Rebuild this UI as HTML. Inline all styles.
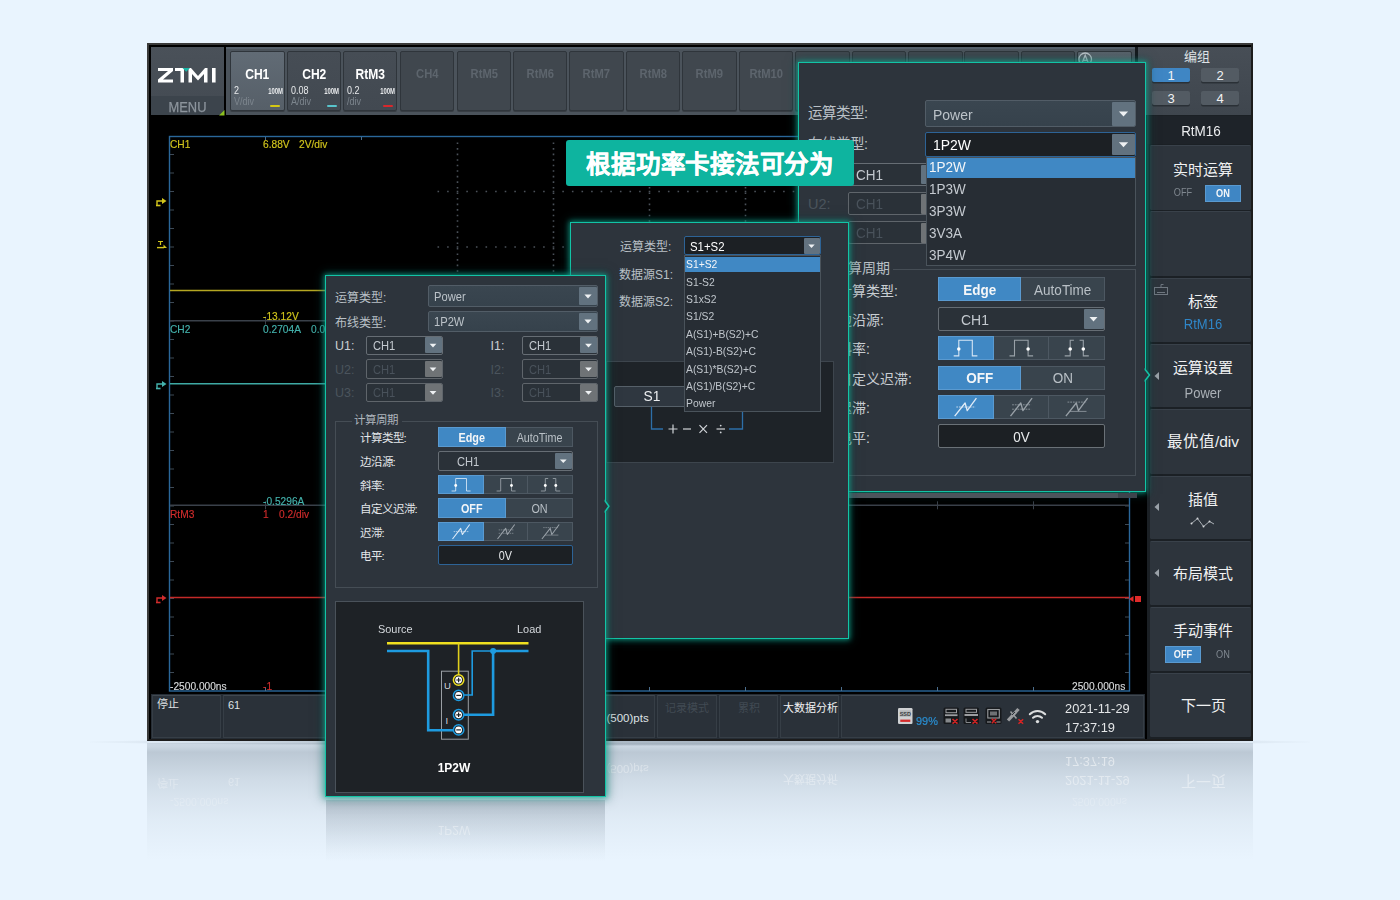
<!DOCTYPE html>
<html lang="zh-CN"><head><meta charset="utf-8"><title>ZTMI Power wiring types</title><style>
html,body{margin:0;padding:0;}
body{width:1400px;height:900px;overflow:hidden;background:#e9f4fe;font-family:"Liberation Sans",sans-serif;position:relative;}
div{position:absolute;box-sizing:border-box;}
.t{white-space:nowrap;overflow:visible;}
svg{position:absolute;overflow:visible;}
</style></head>
<body>
<div style="left:90px;top:738px;width:1220px;height:8px;background:radial-gradient(ellipse at center, rgba(110,125,140,.55) 0%, rgba(110,125,140,.35) 45%, rgba(110,125,140,0) 72%);"></div>
<div style="left:147px;top:743px;width:1106px;height:122px;background:linear-gradient(to bottom, rgba(120,135,150,.26) 0%, rgba(120,135,150,.28) 3%, rgba(120,135,150,.40) 7.500%, rgba(120,135,150,.31) 19%, rgba(120,135,150,.22) 31%, rgba(120,135,150,.14) 47%, rgba(120,135,150,.08) 63%, rgba(120,135,150,.035) 80%, rgba(120,135,150,0) 96%);"></div>
<div style="left:326px;top:800px;width:279px;height:62px;background:linear-gradient(to bottom, rgba(120,135,150,.30) 0%, rgba(120,135,150,.36) 8%, rgba(120,135,150,.24) 30%, rgba(120,135,150,.12) 58%, rgba(120,135,150,.04) 82%, rgba(120,135,150,0) 100%);"></div>
<div class="t" style="left:1065px;top:750.55px;width:80px;height:18.9px;line-height:18.9px;font-size:13.5px;color:rgba(255,255,255,0.5);text-align:left;font-weight:normal;transform-origin:left center;transform:scale(0.95,-1);filter:blur(.5px);">17:37:19</div>
<div class="t" style="left:1065px;top:769.55px;width:80px;height:18.9px;line-height:18.9px;font-size:13.5px;color:rgba(255,255,255,0.42);text-align:left;font-weight:normal;transform-origin:left center;transform:scale(0.95,-1);filter:blur(.5px);">2021-11-29</div>
<div class="t" style="left:1153px;top:770.5px;width:100px;height:21.0px;line-height:21.0px;font-size:15px;color:rgba(255,255,255,0.42);text-align:center;font-weight:normal;transform-origin:center center;transform:scale(1,-1);filter:blur(.5px);">下一页</div>
<div class="t" style="left:780px;top:771.3px;width:60px;height:15.399999999999999px;line-height:15.399999999999999px;font-size:11px;color:rgba(255,255,255,0.38);text-align:center;font-weight:normal;transform-origin:center center;transform:scale(1,-1);filter:blur(.5px);">大数据分析</div>
<div class="t" style="left:606.5px;top:760.95px;width:50px;height:16.099999999999998px;line-height:16.099999999999998px;font-size:11.5px;color:rgba(255,255,255,0.35);text-align:left;font-weight:normal;transform-origin:left center;transform:scale(1,-1);filter:blur(.5px);">(500)pts</div>
<div class="t" style="left:404px;top:820.9px;width:100px;height:18.2px;line-height:18.2px;font-size:13px;color:rgba(255,255,255,0.35);text-align:center;font-weight:normal;transform-origin:center center;transform:scale(0.92,-1);filter:blur(.5px);">1P2W</div>
<div class="t" style="left:157px;top:775.3px;width:40px;height:15.399999999999999px;line-height:15.399999999999999px;font-size:11px;color:rgba(255,255,255,0.3);text-align:left;font-weight:normal;transform-origin:left center;transform:scale(1,-1);filter:blur(.5px);">停止</div>
<div class="t" style="left:228px;top:774.3px;width:40px;height:15.399999999999999px;line-height:15.399999999999999px;font-size:11px;color:rgba(255,255,255,0.3);text-align:left;font-weight:normal;transform-origin:left center;transform:scale(1,-1);filter:blur(.5px);">61</div>
<div class="t" style="left:170px;top:793.65px;width:100px;height:14.7px;line-height:14.7px;font-size:10.5px;color:rgba(255,255,255,0.22);text-align:left;font-weight:normal;transform-origin:left center;transform:scale(1,-1);filter:blur(.5px);">-2500.000ns</div>
<div class="t" style="left:1072px;top:793.65px;width:100px;height:14.7px;line-height:14.7px;font-size:10.5px;color:rgba(255,255,255,0.22);text-align:left;font-weight:normal;transform-origin:left center;transform:scale(1,-1);filter:blur(.5px);">2500.000ns</div>
<div style="left:147px;top:43px;width:1106px;height:698px;background:#000;border:2.6px solid #3a3a3a;border-right-color:#1c1c1c;border-bottom-color:#1c1c1c;"></div>
<div style="left:149px;top:45px;width:1102px;height:694px;background:#000;"></div>
<div style="left:151px;top:47px;width:73px;height:49px;background:linear-gradient(#4a5159,#454c54);"></div>
<div style="left:151px;top:96px;width:73px;height:19px;background:#3c444c;"></div>
<svg style="left:158px;top:68px" width="60" height="15" viewBox="0 0 60 15"><g fill="#fff"><path d="M0,0H15V3L5,11.5H15V14.5H0V11.5L10,3H0Z"/><path d="M17,0H26V14.5H22.5V3H17Z"/><path d="M33,0L40,8L47,0H49.5V14.5H46V6L40,12.5L34,6V14.5H30.5V0Z"/><rect x="54" y="0" width="3.6" height="14.5"/></g><path d="M24.5,0H32L28.2,3.8Z" fill="#19b5a5"/></svg>
<div class="t" style="left:151px;top:98px;width:73px;height:19px;line-height:19px;font-size:14px;color:#8d959d;text-align:center;font-weight:normal;transform:scaleX(.92);-webkit-text-stroke:0.25px #8d959d;">MENU</div>
<svg style="left:218.500px;top:109.500px" width="5.500" height="5.500"><path d="M5.500,0V5.500H0Z" fill="#8dc21f"/></svg>
<div style="left:226px;top:47px;width:909px;height:68px;background:#4b535b;border-top:2.5px solid #56616c;"></div>
<div style="left:230px;top:50.5px;width:54.5px;height:60px;background:linear-gradient(#616b75,#565f68);border:1px solid #2f353b;border-radius:2px;box-shadow:0 1px 0 rgba(0,0,0,.25);"></div>
<div class="t" style="left:230px;top:64px;width:54.5px;height:20px;line-height:20px;font-size:14px;color:#fff;text-align:center;font-weight:bold;transform:scaleX(.86);">CH1</div>
<div style="left:286.5px;top:50.5px;width:54.5px;height:60px;background:linear-gradient(#464d55,#424951);border:1px solid #2f353b;border-radius:2px;box-shadow:0 1px 0 rgba(0,0,0,.25);"></div>
<div class="t" style="left:286.5px;top:64px;width:54.5px;height:20px;line-height:20px;font-size:14px;color:#fff;text-align:center;font-weight:bold;transform:scaleX(.86);">CH2</div>
<div style="left:342.5px;top:50.5px;width:54.5px;height:60px;background:linear-gradient(#464d55,#424951);border:1px solid #2f353b;border-radius:2px;box-shadow:0 1px 0 rgba(0,0,0,.25);"></div>
<div class="t" style="left:342.5px;top:64px;width:54.5px;height:20px;line-height:20px;font-size:14px;color:#fff;text-align:center;font-weight:bold;transform:scaleX(.86);">RtM3</div>
<div style="left:399.5px;top:50.5px;width:54.5px;height:60px;background:#40474e;border:1px solid #2f353b;border-radius:2px;box-shadow:0 1px 0 rgba(0,0,0,.25);"></div>
<div class="t" style="left:399.5px;top:64px;width:54.5px;height:20px;line-height:20px;font-size:13px;color:#5d656d;text-align:center;font-weight:bold;transform:scaleX(.86);">CH4</div>
<div style="left:456.5px;top:50.5px;width:54.5px;height:60px;background:#40474e;border:1px solid #2f353b;border-radius:2px;box-shadow:0 1px 0 rgba(0,0,0,.25);"></div>
<div class="t" style="left:456.5px;top:64px;width:54.5px;height:20px;line-height:20px;font-size:13px;color:#5d656d;text-align:center;font-weight:bold;transform:scaleX(.86);">RtM5</div>
<div style="left:512.5px;top:50.5px;width:54.5px;height:60px;background:#40474e;border:1px solid #2f353b;border-radius:2px;box-shadow:0 1px 0 rgba(0,0,0,.25);"></div>
<div class="t" style="left:512.5px;top:64px;width:54.5px;height:20px;line-height:20px;font-size:13px;color:#5d656d;text-align:center;font-weight:bold;transform:scaleX(.86);">RtM6</div>
<div style="left:569px;top:50.5px;width:54.5px;height:60px;background:#40474e;border:1px solid #2f353b;border-radius:2px;box-shadow:0 1px 0 rgba(0,0,0,.25);"></div>
<div class="t" style="left:569px;top:64px;width:54.5px;height:20px;line-height:20px;font-size:13px;color:#5d656d;text-align:center;font-weight:bold;transform:scaleX(.86);">RtM7</div>
<div style="left:625.5px;top:50.5px;width:54.5px;height:60px;background:#40474e;border:1px solid #2f353b;border-radius:2px;box-shadow:0 1px 0 rgba(0,0,0,.25);"></div>
<div class="t" style="left:625.5px;top:64px;width:54.5px;height:20px;line-height:20px;font-size:13px;color:#5d656d;text-align:center;font-weight:bold;transform:scaleX(.86);">RtM8</div>
<div style="left:682px;top:50.5px;width:54.5px;height:60px;background:#40474e;border:1px solid #2f353b;border-radius:2px;box-shadow:0 1px 0 rgba(0,0,0,.25);"></div>
<div class="t" style="left:682px;top:64px;width:54.5px;height:20px;line-height:20px;font-size:13px;color:#5d656d;text-align:center;font-weight:bold;transform:scaleX(.86);">RtM9</div>
<div style="left:738.5px;top:50.5px;width:54.5px;height:60px;background:#40474e;border:1px solid #2f353b;border-radius:2px;box-shadow:0 1px 0 rgba(0,0,0,.25);"></div>
<div class="t" style="left:738.5px;top:64px;width:54.5px;height:20px;line-height:20px;font-size:13px;color:#5d656d;text-align:center;font-weight:bold;transform:scaleX(.86);">RtM10</div>
<div style="left:795px;top:50.5px;width:54.5px;height:60px;background:#40474e;border:1px solid #2f353b;border-radius:2px;box-shadow:0 1px 0 rgba(0,0,0,.25);"></div>
<div style="left:851.5px;top:50.5px;width:54.5px;height:60px;background:#40474e;border:1px solid #2f353b;border-radius:2px;box-shadow:0 1px 0 rgba(0,0,0,.25);"></div>
<div style="left:908px;top:50.5px;width:54.5px;height:60px;background:#40474e;border:1px solid #2f353b;border-radius:2px;box-shadow:0 1px 0 rgba(0,0,0,.25);"></div>
<div style="left:964px;top:50.5px;width:54.5px;height:60px;background:#40474e;border:1px solid #2f353b;border-radius:2px;box-shadow:0 1px 0 rgba(0,0,0,.25);"></div>
<div style="left:1020.5px;top:50.5px;width:54.5px;height:60px;background:#40474e;border:1px solid #2f353b;border-radius:2px;box-shadow:0 1px 0 rgba(0,0,0,.25);"></div>
<div style="left:1077px;top:50.5px;width:54.5px;height:60px;background:linear-gradient(#59626a,#6a747c);border:1px solid #2f353b;border-radius:2px;box-shadow:0 1px 0 rgba(0,0,0,.25);"></div>
<div class="t" style="left:234px;top:85px;width:30px;height:12px;line-height:12px;font-size:10px;color:#e8eaec;text-align:left;font-weight:normal;transform-origin:left;transform:scaleX(.9);">2</div>
<div class="t" style="left:234px;top:96px;width:30px;height:12px;line-height:12px;font-size:10px;color:#7c858d;text-align:left;font-weight:normal;transform-origin:left;transform:scaleX(.9);">V/div</div>
<div class="t" style="left:252.8px;top:84.5px;width:30px;height:12px;line-height:12px;font-size:9px;color:#e8eaec;text-align:right;font-weight:bold;transform-origin:right;transform:scaleX(.66);">100M</div>
<div style="left:270px;top:105px;width:10px;height:2.2px;background:#d4c814;border-radius:1px;"></div>
<div class="t" style="left:290.5px;top:85px;width:30px;height:12px;line-height:12px;font-size:10px;color:#e8eaec;text-align:left;font-weight:normal;transform-origin:left;transform:scaleX(.9);">0.08</div>
<div class="t" style="left:290.5px;top:96px;width:30px;height:12px;line-height:12px;font-size:10px;color:#7c858d;text-align:left;font-weight:normal;transform-origin:left;transform:scaleX(.9);">A/div</div>
<div class="t" style="left:309.3px;top:84.5px;width:30px;height:12px;line-height:12px;font-size:9px;color:#e8eaec;text-align:right;font-weight:bold;transform-origin:right;transform:scaleX(.66);">100M</div>
<div style="left:326.5px;top:105px;width:10px;height:2.2px;background:#58c4cc;border-radius:1px;"></div>
<div class="t" style="left:346.5px;top:85px;width:30px;height:12px;line-height:12px;font-size:10px;color:#e8eaec;text-align:left;font-weight:normal;transform-origin:left;transform:scaleX(.9);">0.2</div>
<div class="t" style="left:346.5px;top:96px;width:30px;height:12px;line-height:12px;font-size:10px;color:#7c858d;text-align:left;font-weight:normal;transform-origin:left;transform:scaleX(.9);">/div</div>
<div class="t" style="left:365.3px;top:84.5px;width:30px;height:12px;line-height:12px;font-size:9px;color:#e8eaec;text-align:right;font-weight:bold;transform-origin:right;transform:scaleX(.66);">100M</div>
<div style="left:382.5px;top:105px;width:10px;height:2.2px;background:#d8282c;border-radius:1px;"></div>
<svg style="left:1077px;top:50px" width="20" height="16"><circle cx="8.200" cy="9.300" r="6.300" fill="none" stroke="#bcc2c8" stroke-width="1.300"/><path d="M5.300,12.600L8.200,5.300L11.100,12.600M6.300,10.300H10.100" fill="none" stroke="#bcc2c8" stroke-width="1.300"/></svg>
<svg style="left:0;top:0" width="1400" height="900"><line x1="457.5" y1="142.5" x2="457.5" y2="320" stroke="#4b5159" stroke-width="1.6" stroke-dasharray="1.6 3.95"/><line x1="553.5" y1="142.5" x2="553.5" y2="320" stroke="#4b5159" stroke-width="1.6" stroke-dasharray="1.6 3.95"/><line x1="649.5" y1="142.5" x2="649.5" y2="320" stroke="#4b5159" stroke-width="1.6" stroke-dasharray="1.6 3.95"/><line x1="745.5" y1="142.5" x2="745.5" y2="320" stroke="#4b5159" stroke-width="1.6" stroke-dasharray="1.6 3.95"/><line x1="841.5" y1="142.5" x2="841.5" y2="320" stroke="#4b5159" stroke-width="1.6" stroke-dasharray="1.6 3.95"/><line x1="937.5" y1="142.5" x2="937.5" y2="320" stroke="#4b5159" stroke-width="1.6" stroke-dasharray="1.6 3.95"/><line x1="1033.5" y1="142.5" x2="1033.5" y2="320" stroke="#4b5159" stroke-width="1.6" stroke-dasharray="1.6 3.95"/><line x1="437.5" y1="191.5" x2="1129" y2="191.5" stroke="#4b5159" stroke-width="1.6" stroke-dasharray="1.6 8.0"/><line x1="437.5" y1="247.0" x2="1129" y2="247.0" stroke="#4b5159" stroke-width="1.6" stroke-dasharray="1.6 8.0"/><rect x="169.5" y="136.5" width="960" height="554.5" fill="none" stroke="#2a679a" stroke-width="1.4"/><line x1="170" y1="154.5" x2="174" y2="154.5" stroke="#3d4a57" stroke-width="1"/><line x1="170" y1="173.0" x2="174" y2="173.0" stroke="#3d4a57" stroke-width="1"/><line x1="170" y1="191.5" x2="174" y2="191.5" stroke="#3d4a57" stroke-width="1"/><line x1="170" y1="210.0" x2="174" y2="210.0" stroke="#3d4a57" stroke-width="1"/><line x1="170" y1="228.5" x2="174" y2="228.5" stroke="#3d4a57" stroke-width="1"/><line x1="170" y1="247.0" x2="174" y2="247.0" stroke="#3d4a57" stroke-width="1"/><line x1="170" y1="265.5" x2="174" y2="265.5" stroke="#3d4a57" stroke-width="1"/><line x1="170" y1="284.0" x2="174" y2="284.0" stroke="#3d4a57" stroke-width="1"/><line x1="170" y1="302.5" x2="174" y2="302.5" stroke="#3d4a57" stroke-width="1"/><line x1="170" y1="321.0" x2="174" y2="321.0" stroke="#3d4a57" stroke-width="1"/><line x1="170" y1="339.5" x2="174" y2="339.5" stroke="#3d4a57" stroke-width="1"/><line x1="170" y1="358.0" x2="174" y2="358.0" stroke="#3d4a57" stroke-width="1"/><line x1="170" y1="376.5" x2="174" y2="376.5" stroke="#3d4a57" stroke-width="1"/><line x1="170" y1="395.0" x2="174" y2="395.0" stroke="#3d4a57" stroke-width="1"/><line x1="170" y1="413.5" x2="174" y2="413.5" stroke="#3d4a57" stroke-width="1"/><line x1="170" y1="432.0" x2="174" y2="432.0" stroke="#3d4a57" stroke-width="1"/><line x1="170" y1="450.5" x2="174" y2="450.5" stroke="#3d4a57" stroke-width="1"/><line x1="170" y1="469.0" x2="174" y2="469.0" stroke="#3d4a57" stroke-width="1"/><line x1="170" y1="487.5" x2="174" y2="487.5" stroke="#3d4a57" stroke-width="1"/><line x1="170" y1="506.0" x2="174" y2="506.0" stroke="#3d4a57" stroke-width="1"/><line x1="170" y1="524.5" x2="174" y2="524.5" stroke="#3d4a57" stroke-width="1"/><line x1="170" y1="543.0" x2="174" y2="543.0" stroke="#3d4a57" stroke-width="1"/><line x1="170" y1="561.5" x2="174" y2="561.5" stroke="#3d4a57" stroke-width="1"/><line x1="170" y1="580.0" x2="174" y2="580.0" stroke="#3d4a57" stroke-width="1"/><line x1="170" y1="598.5" x2="174" y2="598.5" stroke="#3d4a57" stroke-width="1"/><line x1="170" y1="617.0" x2="174" y2="617.0" stroke="#3d4a57" stroke-width="1"/><line x1="170" y1="635.5" x2="174" y2="635.5" stroke="#3d4a57" stroke-width="1"/><line x1="170" y1="654.0" x2="174" y2="654.0" stroke="#3d4a57" stroke-width="1"/><line x1="170" y1="672.5" x2="174" y2="672.5" stroke="#3d4a57" stroke-width="1"/><line x1="1125" y1="154.5" x2="1129" y2="154.5" stroke="#3d4a57" stroke-width="1"/><line x1="1125" y1="173.0" x2="1129" y2="173.0" stroke="#3d4a57" stroke-width="1"/><line x1="1125" y1="191.5" x2="1129" y2="191.5" stroke="#3d4a57" stroke-width="1"/><line x1="1125" y1="210.0" x2="1129" y2="210.0" stroke="#3d4a57" stroke-width="1"/><line x1="1125" y1="228.5" x2="1129" y2="228.5" stroke="#3d4a57" stroke-width="1"/><line x1="1125" y1="247.0" x2="1129" y2="247.0" stroke="#3d4a57" stroke-width="1"/><line x1="1125" y1="265.5" x2="1129" y2="265.5" stroke="#3d4a57" stroke-width="1"/><line x1="1125" y1="284.0" x2="1129" y2="284.0" stroke="#3d4a57" stroke-width="1"/><line x1="1125" y1="302.5" x2="1129" y2="302.5" stroke="#3d4a57" stroke-width="1"/><line x1="1125" y1="321.0" x2="1129" y2="321.0" stroke="#3d4a57" stroke-width="1"/><line x1="1125" y1="339.5" x2="1129" y2="339.5" stroke="#3d4a57" stroke-width="1"/><line x1="1125" y1="358.0" x2="1129" y2="358.0" stroke="#3d4a57" stroke-width="1"/><line x1="1125" y1="376.5" x2="1129" y2="376.5" stroke="#3d4a57" stroke-width="1"/><line x1="1125" y1="395.0" x2="1129" y2="395.0" stroke="#3d4a57" stroke-width="1"/><line x1="1125" y1="413.5" x2="1129" y2="413.5" stroke="#3d4a57" stroke-width="1"/><line x1="1125" y1="432.0" x2="1129" y2="432.0" stroke="#3d4a57" stroke-width="1"/><line x1="1125" y1="450.5" x2="1129" y2="450.5" stroke="#3d4a57" stroke-width="1"/><line x1="1125" y1="469.0" x2="1129" y2="469.0" stroke="#3d4a57" stroke-width="1"/><line x1="1125" y1="487.5" x2="1129" y2="487.5" stroke="#3d4a57" stroke-width="1"/><line x1="1125" y1="506.0" x2="1129" y2="506.0" stroke="#3d4a57" stroke-width="1"/><line x1="1125" y1="524.5" x2="1129" y2="524.5" stroke="#3d4a57" stroke-width="1"/><line x1="1125" y1="543.0" x2="1129" y2="543.0" stroke="#3d4a57" stroke-width="1"/><line x1="1125" y1="561.5" x2="1129" y2="561.5" stroke="#3d4a57" stroke-width="1"/><line x1="1125" y1="580.0" x2="1129" y2="580.0" stroke="#3d4a57" stroke-width="1"/><line x1="1125" y1="598.5" x2="1129" y2="598.5" stroke="#3d4a57" stroke-width="1"/><line x1="1125" y1="617.0" x2="1129" y2="617.0" stroke="#3d4a57" stroke-width="1"/><line x1="1125" y1="635.5" x2="1129" y2="635.5" stroke="#3d4a57" stroke-width="1"/><line x1="1125" y1="654.0" x2="1129" y2="654.0" stroke="#3d4a57" stroke-width="1"/><line x1="1125" y1="672.5" x2="1129" y2="672.5" stroke="#3d4a57" stroke-width="1"/><line x1="265.5" y1="316.7" x2="265.5" y2="324.7" stroke="#3a414a" stroke-width="1"/><line x1="265.5" y1="501.3" x2="265.5" y2="509.3" stroke="#3a414a" stroke-width="1"/><line x1="361.5" y1="316.7" x2="361.5" y2="324.7" stroke="#3a414a" stroke-width="1"/><line x1="361.5" y1="501.3" x2="361.5" y2="509.3" stroke="#3a414a" stroke-width="1"/><line x1="457.5" y1="316.7" x2="457.5" y2="324.7" stroke="#3a414a" stroke-width="1"/><line x1="457.5" y1="501.3" x2="457.5" y2="509.3" stroke="#3a414a" stroke-width="1"/><line x1="553.5" y1="316.7" x2="553.5" y2="324.7" stroke="#3a414a" stroke-width="1"/><line x1="553.5" y1="501.3" x2="553.5" y2="509.3" stroke="#3a414a" stroke-width="1"/><line x1="649.5" y1="316.7" x2="649.5" y2="324.7" stroke="#3a414a" stroke-width="1"/><line x1="649.5" y1="501.3" x2="649.5" y2="509.3" stroke="#3a414a" stroke-width="1"/><line x1="745.5" y1="316.7" x2="745.5" y2="324.7" stroke="#3a414a" stroke-width="1"/><line x1="745.5" y1="501.3" x2="745.5" y2="509.3" stroke="#3a414a" stroke-width="1"/><line x1="841.5" y1="316.7" x2="841.5" y2="324.7" stroke="#3a414a" stroke-width="1"/><line x1="841.5" y1="501.3" x2="841.5" y2="509.3" stroke="#3a414a" stroke-width="1"/><line x1="937.5" y1="316.7" x2="937.5" y2="324.7" stroke="#3a414a" stroke-width="1"/><line x1="937.5" y1="501.3" x2="937.5" y2="509.3" stroke="#3a414a" stroke-width="1"/><line x1="1033.5" y1="316.7" x2="1033.5" y2="324.7" stroke="#3a414a" stroke-width="1"/><line x1="1033.5" y1="501.3" x2="1033.5" y2="509.3" stroke="#3a414a" stroke-width="1"/><line x1="265.5" y1="137" x2="265.5" y2="140" stroke="#4b6e8d" stroke-width="1"/><line x1="265.5" y1="687" x2="265.5" y2="691" stroke="#4b6e8d" stroke-width="1"/><line x1="361.5" y1="137" x2="361.5" y2="140" stroke="#4b6e8d" stroke-width="1"/><line x1="361.5" y1="687" x2="361.5" y2="691" stroke="#4b6e8d" stroke-width="1"/><line x1="457.5" y1="687" x2="457.5" y2="691" stroke="#4b6e8d" stroke-width="1"/><line x1="553.5" y1="687" x2="553.5" y2="691" stroke="#4b6e8d" stroke-width="1"/><line x1="649.5" y1="687" x2="649.5" y2="691" stroke="#4b6e8d" stroke-width="1"/><line x1="745.5" y1="687" x2="745.5" y2="691" stroke="#4b6e8d" stroke-width="1"/><line x1="841.5" y1="687" x2="841.5" y2="691" stroke="#4b6e8d" stroke-width="1"/><line x1="937.5" y1="687" x2="937.5" y2="691" stroke="#4b6e8d" stroke-width="1"/><line x1="1033.5" y1="687" x2="1033.5" y2="691" stroke="#4b6e8d" stroke-width="1"/><line x1="170" y1="320.7" x2="1129" y2="320.7" stroke="#3a414a" stroke-width="1.4"/><line x1="170" y1="505.3" x2="1129" y2="505.3" stroke="#3a414a" stroke-width="1.4"/><line x1="170" y1="290.5" x2="1129" y2="290.5" stroke="#b5a722" stroke-width="1.6"/><line x1="170" y1="383.7" x2="1129" y2="383.7" stroke="#3ea9a4" stroke-width="1.6"/><line x1="170" y1="597.5" x2="1129" y2="597.5" stroke="#c42a28" stroke-width="1.6"/></svg>
<div class="t" style="left:170px;top:138px;width:100px;height:12px;line-height:12px;font-size:10.5px;color:#d3c61c;text-align:left;font-weight:normal;transform-origin:left;transform:scaleX(.97);-webkit-text-stroke:0.15px currentColor;">CH1</div>
<div class="t" style="left:263px;top:138px;width:100px;height:12px;line-height:12px;font-size:10.5px;color:#d3c61c;text-align:left;font-weight:normal;transform-origin:left;transform:scaleX(.97);-webkit-text-stroke:0.15px currentColor;">6.88V</div>
<div class="t" style="left:299px;top:138px;width:100px;height:12px;line-height:12px;font-size:10.5px;color:#d3c61c;text-align:left;font-weight:normal;transform-origin:left;transform:scaleX(.97);-webkit-text-stroke:0.15px currentColor;">2V/div</div>
<div class="t" style="left:263px;top:310px;width:100px;height:12px;line-height:12px;font-size:10.5px;color:#d3c61c;text-align:left;font-weight:normal;transform-origin:left;transform:scaleX(.97);-webkit-text-stroke:0.15px currentColor;">-13.12V</div>
<div class="t" style="left:170px;top:323px;width:100px;height:12px;line-height:12px;font-size:10.5px;color:#44b3ad;text-align:left;font-weight:normal;transform-origin:left;transform:scaleX(.97);-webkit-text-stroke:0.15px currentColor;">CH2</div>
<div class="t" style="left:263px;top:323px;width:100px;height:12px;line-height:12px;font-size:10.5px;color:#44b3ad;text-align:left;font-weight:normal;transform-origin:left;transform:scaleX(.97);-webkit-text-stroke:0.15px currentColor;">0.2704A</div>
<div class="t" style="left:311px;top:323px;width:100px;height:12px;line-height:12px;font-size:10.5px;color:#44b3ad;text-align:left;font-weight:normal;transform-origin:left;transform:scaleX(.97);-webkit-text-stroke:0.15px currentColor;">0.0</div>
<div class="t" style="left:263px;top:495px;width:100px;height:12px;line-height:12px;font-size:10.5px;color:#44b3ad;text-align:left;font-weight:normal;transform-origin:left;transform:scaleX(.97);-webkit-text-stroke:0.15px currentColor;">-0.5296A</div>
<div class="t" style="left:170px;top:508px;width:100px;height:12px;line-height:12px;font-size:10.5px;color:#d12c2c;text-align:left;font-weight:normal;transform-origin:left;transform:scaleX(.97);-webkit-text-stroke:0.15px currentColor;">RtM3</div>
<div class="t" style="left:263px;top:508px;width:100px;height:12px;line-height:12px;font-size:10.5px;color:#d12c2c;text-align:left;font-weight:normal;transform-origin:left;transform:scaleX(.97);-webkit-text-stroke:0.15px currentColor;">1</div>
<div class="t" style="left:279px;top:508px;width:100px;height:12px;line-height:12px;font-size:10.5px;color:#d12c2c;text-align:left;font-weight:normal;transform-origin:left;transform:scaleX(.97);-webkit-text-stroke:0.15px currentColor;">0.2/div</div>
<div class="t" style="left:170px;top:680px;width:100px;height:12px;line-height:12px;font-size:10.5px;color:#d8dadc;text-align:left;font-weight:normal;transform-origin:left;transform:scaleX(.97);-webkit-text-stroke:0.15px currentColor;">-2500.000ns</div>
<div class="t" style="left:263px;top:680px;width:100px;height:12px;line-height:12px;font-size:10.5px;color:#d12c2c;text-align:left;font-weight:normal;transform-origin:left;transform:scaleX(.97);-webkit-text-stroke:0.15px currentColor;">-1</div>
<div class="t" style="left:1072px;top:680px;width:100px;height:12px;line-height:12px;font-size:10.5px;color:#d8dadc;text-align:left;font-weight:normal;transform-origin:left;transform:scaleX(.97);-webkit-text-stroke:0.15px currentColor;">2500.000ns</div>
<svg style="left:156px;top:196px" width="12" height="12"><path d="M1,9V5H6" fill="none" stroke="#d3c61c" stroke-width="1.4"/><path d="M6,2L10.5,5L6,8Z" fill="#d3c61c"/><path d="M0,9.5H4.5" stroke="#d3c61c" stroke-width="1.6"/></svg>
<svg style="left:156px;top:239px" width="12" height="12"><path d="M2,2.5H7M4.5,2.5V6" fill="none" stroke="#d3c61c" stroke-width="1.2"/><path d="M1,8.6H8" stroke="#d3c61c" stroke-width="1.4"/><path d="M7.5,5.5L11,9L7.5,9Z" fill="#d3c61c"/></svg>
<svg style="left:156px;top:379px" width="12" height="12"><path d="M1,9V5H6" fill="none" stroke="#44b3ad" stroke-width="1.4"/><path d="M6,2L10.5,5L6,8Z" fill="#44b3ad"/><path d="M0,9.5H4.5" stroke="#44b3ad" stroke-width="1.6"/></svg>
<svg style="left:156px;top:593px" width="12" height="12"><path d="M1,9V5H6" fill="none" stroke="#d12c2c" stroke-width="1.4"/><path d="M6,2L10.5,5L6,8Z" fill="#d12c2c"/><path d="M0,9.5H4.5" stroke="#d12c2c" stroke-width="1.6"/></svg>
<svg style="left:1129px;top:594px" width="14" height="10"><path d="M0,5L4.5,2V8Z" fill="#e02a2a"/><rect x="6" y="2" width="6" height="6" fill="#e02a2a"/></svg>
<div style="left:151px;top:694px;width:994px;height:45px;background:#262d35;"></div>
<div style="left:152px;top:695px;width:69px;height:43px;background:#2a3139;border:1px solid #363e46;border-top-color:#404850;"></div>
<div style="left:223px;top:695px;width:371px;height:43px;background:#2a3139;border:1px solid #363e46;border-top-color:#404850;"></div>
<div style="left:596px;top:695px;width:59px;height:43px;background:#2a3139;border:1px solid #363e46;border-top-color:#404850;"></div>
<div style="left:657px;top:695px;width:60px;height:43px;background:#2a3139;border:1px solid #363e46;border-top-color:#404850;"></div>
<div style="left:719px;top:695px;width:59px;height:43px;background:#2a3139;border:1px solid #363e46;border-top-color:#404850;"></div>
<div style="left:780px;top:695px;width:59px;height:43px;background:#2a3139;border:1px solid #363e46;border-top-color:#404850;"></div>
<div style="left:841px;top:695px;width:303px;height:43px;background:#2a3139;border:1px solid #363e46;border-top-color:#404850;"></div>
<div class="t" style="left:157px;top:697px;width:40px;height:14px;line-height:14px;font-size:11px;color:#dfe2e5;text-align:left;font-weight:normal;">停止</div>
<div class="t" style="left:228px;top:698px;width:40px;height:14px;line-height:14px;font-size:11px;color:#dfe2e5;text-align:left;font-weight:normal;">61</div>
<div class="t" style="left:606.5px;top:711px;width:50px;height:14px;line-height:14px;font-size:11.5px;color:#dfe2e5;text-align:left;font-weight:normal;transform-origin:left;transform:scaleX(1);">(500)pts</div>
<div class="t" style="left:657px;top:701px;width:60px;height:14px;line-height:14px;font-size:11px;color:#414a53;text-align:center;font-weight:normal;">记录模式</div>
<div class="t" style="left:719px;top:701px;width:60px;height:14px;line-height:14px;font-size:11px;color:#414a53;text-align:center;font-weight:normal;">累积</div>
<div class="t" style="left:780px;top:701px;width:60px;height:14px;line-height:14px;font-size:11px;color:#f2f3f4;text-align:center;font-weight:normal;">大数据分析</div>
<div class="t" style="left:1065px;top:700.5px;width:80px;height:15px;line-height:15px;font-size:13.5px;color:#e4e6e8;text-align:left;font-weight:normal;transform-origin:left;transform:scaleX(.95);">2021-11-29</div>
<div class="t" style="left:1065px;top:720px;width:80px;height:15px;line-height:15px;font-size:13.5px;color:#e4e6e8;text-align:left;font-weight:normal;transform-origin:left;transform:scaleX(.95);">17:37:19</div>
<svg style="left:0;top:0" width="1400" height="900">
<rect x="898" y="708" width="14.500" height="16" rx="1.200" fill="#cfd1d3"/><rect x="899.800" y="710.300" width="11" height="6.500" fill="#b4b7ba"/><text x="905.300" y="716" font-size="5.500" font-weight="bold" text-anchor="middle" fill="#3a3e42" font-family="Liberation Sans, sans-serif">SSD</text><rect x="900.300" y="719.600" width="10" height="2.300" fill="#d42a2a"/>
<g><rect x="943.500" y="707.500" width="15.500" height="16.500" rx="1.500" fill="#16191c"/><rect x="946" y="709.300" width="10.500" height="3.400" fill="none" stroke="#9b9da0" stroke-width="1"/><rect x="945" y="714.300" width="12.500" height="1.800" fill="#9b9da0"/><path d="M945.500,722.500V718.500H951V722.500Z" fill="#85888b"/>
<rect x="963.500" y="707.500" width="15.500" height="16.500" rx="1.500" fill="#16191c"/><rect x="966" y="709.300" width="10.500" height="3" fill="none" stroke="#9b9da0" stroke-width="1"/><rect x="964.500" y="714" width="13.500" height="2" fill="#9b9da0"/><path d="M966,718.500V722.500H971" fill="none" stroke="#85888b" stroke-width="1"/>
<rect x="985.500" y="707.500" width="16" height="16.500" rx="1.500" fill="#16191c"/><rect x="987.800" y="709.500" width="11.500" height="8.500" fill="none" stroke="#9b9da0" stroke-width="1.100"/><rect x="990" y="711.500" width="7" height="4" fill="#6e7174"/><path d="M987,722H991M996.500,722H1000.500" stroke="#9b9da0" stroke-width="1.200"/>
<path d="M1008,720.500L1018.500,709" stroke="#9b9da0" stroke-width="3.200"/><path d="M1010.500,711.500L1016.500,718.500" stroke="#9b9da0" stroke-width="1.600"/><path d="M1012,715L1015,712" stroke="#2b3239" stroke-width="1"/></g>
<path d="M952.500,719l5,4.600m0,-4.600l-5,4.600M972.500,719l5,4.600m0,-4.600l-5,4.600M991.800,718.800l4.400,4.400m0,-4.400l-4.400,4.400M1018.500,719.200l4.600,4.600m0,-4.600l-4.600,4.600" stroke="#d62424" stroke-width="1.500" fill="none"/>
<g fill="none" stroke="#dcdedf" stroke-width="2" stroke-linecap="round"><path d="M1029.800,714.300A10.800,10.800 0 0 1 1045.200,714.300"/><path d="M1033,717.800A6.300,6.300 0 0 1 1042,717.800"/></g><circle cx="1037.500" cy="721.600" r="1.700" fill="#dcdedf"/>
</svg>
<div class="t" style="left:915.5px;top:714px;width:30px;height:14px;line-height:14px;font-size:11.5px;color:#2a8fd2;text-align:left;font-weight:normal;transform-origin:left;transform:scaleX(.95);-webkit-text-stroke:.2px #2a8fd2;">99%</div>
<div style="left:1135px;top:47px;width:2.5px;height:68px;background:#15191d;"></div>
<div style="left:1146.5px;top:115px;width:104.5px;height:624px;background:#1b2025;"></div>
<div style="left:1137.5px;top:47px;width:113.5px;height:68px;background:linear-gradient(#474e56,#3f464e);"></div>
<div class="t" style="left:1139px;top:49px;width:112px;height:16px;line-height:16px;font-size:13px;color:#dfe2e5;text-align:center;font-weight:normal;padding-left:4px;">编组</div>
<div style="left:1152px;top:68px;width:38px;height:14px;background:#3f86c4;border-radius:2px;box-shadow:0 1.5px 0 #2a3036;"></div>
<div class="t" style="left:1152px;top:68px;width:38px;height:15px;line-height:15px;font-size:13px;color:#f2f3f4;text-align:center;font-weight:normal;">1</div>
<div style="left:1201px;top:68px;width:38px;height:14px;background:#535b63;border-radius:2px;box-shadow:0 1.5px 0 #2a3036;"></div>
<div class="t" style="left:1201px;top:68px;width:38px;height:15px;line-height:15px;font-size:13px;color:#f2f3f4;text-align:center;font-weight:normal;">2</div>
<div style="left:1152px;top:91px;width:38px;height:14px;background:#535b63;border-radius:2px;box-shadow:0 1.5px 0 #2a3036;"></div>
<div class="t" style="left:1152px;top:91px;width:38px;height:15px;line-height:15px;font-size:13px;color:#f2f3f4;text-align:center;font-weight:normal;">3</div>
<div style="left:1201px;top:91px;width:38px;height:14px;background:#535b63;border-radius:2px;box-shadow:0 1.5px 0 #2a3036;"></div>
<div class="t" style="left:1201px;top:91px;width:38px;height:15px;line-height:15px;font-size:13px;color:#f2f3f4;text-align:center;font-weight:normal;">4</div>
<div style="left:1147px;top:116px;width:104px;height:28px;background:#1e2329;"></div>
<div class="t" style="left:1147px;top:117px;width:108px;height:28px;line-height:28px;font-size:14.5px;color:#eceef0;text-align:center;font-weight:normal;transform:scaleX(.93);">RtM16</div>
<div style="left:1149.5px;top:145px;width:101px;height:64.69999999999999px;background:#2d343c;border-top:1px solid #39414a;border-radius:1.5px;"></div>
<div style="left:1149.5px;top:211.4px;width:101px;height:64.6px;background:#2d343c;border-top:1px solid #39414a;border-radius:1.5px;"></div>
<div style="left:1149.5px;top:277.5px;width:101px;height:64.0px;background:#2d343c;border-top:1px solid #39414a;border-radius:1.5px;"></div>
<div style="left:1149.5px;top:343.5px;width:101px;height:63.5px;background:#2d343c;border-top:1px solid #39414a;border-radius:1.5px;"></div>
<div style="left:1149.5px;top:409px;width:101px;height:64.5px;background:#2d343c;border-top:1px solid #39414a;border-radius:1.5px;"></div>
<div style="left:1149.5px;top:475.5px;width:101px;height:63.5px;background:#2d343c;border-top:1px solid #39414a;border-radius:1.5px;"></div>
<div style="left:1149.5px;top:541px;width:101px;height:63.799999999999955px;background:#2d343c;border-top:1px solid #39414a;border-radius:1.5px;"></div>
<div style="left:1149.5px;top:607px;width:101px;height:64px;background:#2d343c;border-top:1px solid #39414a;border-radius:1.5px;"></div>
<div style="left:1149.5px;top:673px;width:101px;height:64px;background:#2d343c;border-top:1px solid #39414a;border-radius:1.5px;"></div>
<div class="t" style="left:1153px;top:160px;width:100px;height:20px;line-height:20px;font-size:15px;color:#f0f1f2;text-align:center;font-weight:normal;">实时运算</div>
<div class="t" style="left:1171px;top:186px;width:24px;height:14px;line-height:14px;font-size:10px;color:#7f878f;text-align:center;font-weight:normal;transform:scaleX(.92);">OFF</div>
<div style="left:1205px;top:185px;width:36px;height:17px;background:#3f86c4;border:1px solid #5a9ad0;"></div>
<div class="t" style="left:1205px;top:186px;width:36px;height:15px;line-height:15px;font-size:10px;color:#f4f6f8;text-align:center;font-weight:bold;transform:scaleX(.92);">ON</div>
<svg style="left:1153px;top:282px" width="16" height="14"><rect x="1.500" y="5.500" width="13" height="7" fill="none" stroke="#6f7780" stroke-width="1"/><path d="M8,5V2.500H10.500M4,10.500H12" stroke="#6f7780" fill="none" stroke-width="1"/></svg>
<div class="t" style="left:1153px;top:292px;width:100px;height:20px;line-height:20px;font-size:15px;color:#f0f1f2;text-align:center;font-weight:normal;">标签</div>
<div class="t" style="left:1153px;top:315px;width:100px;height:18px;line-height:18px;font-size:14px;color:#2f86c8;text-align:center;font-weight:normal;transform:scaleX(.93);">RtM16</div>
<div class="t" style="left:1153px;top:358px;width:100px;height:20px;line-height:20px;font-size:15px;color:#f0f1f2;text-align:center;font-weight:normal;">运算设置</div>
<div class="t" style="left:1153px;top:384px;width:100px;height:18px;line-height:18px;font-size:14px;color:#aab0b6;text-align:center;font-weight:normal;transform:scaleX(.93);">Power</div>
<div class="t" style="left:1153px;top:431px;width:100px;height:22px;line-height:22px;font-size:15.5px;color:#f0f1f2;text-align:center;font-weight:normal;">最优值/div</div>
<div class="t" style="left:1153px;top:490px;width:100px;height:20px;line-height:20px;font-size:15px;color:#f0f1f2;text-align:center;font-weight:normal;">插值</div>
<svg style="left:1190px;top:516px" width="26" height="14"><path d="M1.500,7.500L7.500,2.500L13.500,10.500L19.500,5.500L24,8" fill="none" stroke="#aab0b6" stroke-width="1"/><g fill="#d5d8db"><circle cx="1.500" cy="7.500" r="1"/><circle cx="7.500" cy="2.500" r="1"/><circle cx="13.500" cy="10.500" r="1"/><circle cx="19.500" cy="5.500" r="1"/></g></svg>
<div class="t" style="left:1153px;top:564px;width:100px;height:20px;line-height:20px;font-size:15px;color:#f0f1f2;text-align:center;font-weight:normal;">布局模式</div>
<div class="t" style="left:1153px;top:621px;width:100px;height:20px;line-height:20px;font-size:15px;color:#f0f1f2;text-align:center;font-weight:normal;">手动事件</div>
<div style="left:1165px;top:646px;width:36px;height:17px;background:#3f86c4;border:1px solid #5a9ad0;"></div>
<div class="t" style="left:1165px;top:647px;width:36px;height:15px;line-height:15px;font-size:10px;color:#f4f6f8;text-align:center;font-weight:bold;transform:scaleX(.92);">OFF</div>
<div class="t" style="left:1211px;top:648px;width:24px;height:14px;line-height:14px;font-size:10px;color:#7f878f;text-align:center;font-weight:normal;transform:scaleX(.92);">ON</div>
<div class="t" style="left:1153px;top:696px;width:100px;height:20px;line-height:20px;font-size:15px;color:#f0f1f2;text-align:center;font-weight:normal;">下一页</div>
<svg style="left:1154px;top:372px" width="6" height="9"><path d="M5,0V8L0.500,4Z" fill="#9aa1a8"/></svg>
<svg style="left:1154px;top:503px" width="6" height="9"><path d="M5,0V8L0.500,4Z" fill="#9aa1a8"/></svg>
<svg style="left:1154px;top:569px" width="6" height="9"><path d="M5,0V8L0.500,4Z" fill="#9aa1a8"/></svg>
<div style="left:798px;top:61.5px;width:348px;height:430.5px;background:#2d343c;border:1.5px solid #12c4a6;box-shadow:0 0 5px 1px rgba(18,196,166,.6), 0 0 10px 2px rgba(10,80,78,.5);"></div>
<div style="left:849px;top:492.5px;width:288px;height:5px;background:#4c545c;"></div>
<div style="left:1118px;top:492.5px;width:19px;height:5px;background:#3d444c;"></div>
<div class="t" style="left:808px;top:103.03px;width:120px;height:21.75px;line-height:21.75px;font-size:14.5px;color:#b9c0c6;text-align:left;font-weight:normal;">运算类型:</div>
<div class="t" style="left:808px;top:134.23000000000002px;width:120px;height:21.75px;line-height:21.75px;font-size:14.5px;color:#b9c0c6;text-align:left;font-weight:normal;">布线类型:</div>
<div style="left:924.5px;top:100px;width:211.5px;height:27px;background:linear-gradient(#3a4650,#36424c);border:1px solid #525d67;border-radius:2px;"></div>
<div style="left:1112.0px;top:101.5px;width:23px;height:24px;background:#62727f;border-radius:1px;"></div>
<svg style="left:0;top:0" width="1400" height="900"><path d="M1118.9,111.4H1128.1L1123.5,116.5Z" fill="#eef1f3"/></svg>
<div class="t" style="left:932.5px;top:100.6px;width:180.5px;height:27px;line-height:27px;font-size:15px;color:#bcc3c9;text-align:left;font-weight:normal;transform-origin:left;transform:scaleX(0.93);">Power</div>
<div style="left:924.5px;top:132px;width:211.5px;height:24.5px;background:#1c2024;border:1px solid #2d6396;border-radius:2px;"></div>
<div style="left:1112.0px;top:133.5px;width:23px;height:21.5px;background:#62727f;border-radius:1px;"></div>
<svg style="left:0;top:0" width="1400" height="900"><path d="M1118.9,142.2H1128.1L1123.5,147.2Z" fill="#eef1f3"/></svg>
<div class="t" style="left:932.5px;top:132.6px;width:180.5px;height:24.5px;line-height:24.5px;font-size:15px;color:#ffffff;text-align:left;font-weight:normal;transform-origin:left;transform:scaleX(0.93);">1P2W</div>
<div class="t" style="left:808px;top:164.43px;width:120px;height:21.75px;line-height:21.75px;font-size:14.5px;color:#b9c0c6;text-align:left;font-weight:normal;">U1:</div>
<div style="left:848px;top:163.3px;width:97px;height:22.7px;background:#2a3138;border:1px solid #666d74;border-radius:2px;"></div>
<div style="left:921px;top:164.8px;width:23px;height:19.7px;background:#62727f;border-radius:1px;"></div>
<svg style="left:0;top:0" width="1400" height="900"><path d="M927.9,172.6H937.1L932.5,177.6Z" fill="#eef1f3"/></svg>
<div class="t" style="left:856px;top:164.025px;width:66px;height:22.7px;line-height:22.7px;font-size:14.5px;color:#c3c9cf;text-align:left;font-weight:normal;transform-origin:left;transform:scaleX(0.93);">CH1</div>
<div class="t" style="left:808px;top:193.73000000000002px;width:120px;height:21.75px;line-height:21.75px;font-size:14.5px;color:#4b545d;text-align:left;font-weight:normal;">U2:</div>
<div style="left:848px;top:192px;width:97px;height:23px;background:#2a3138;border:1px solid #5f656b;border-radius:2px;"></div>
<div style="left:921px;top:193.5px;width:23px;height:20px;background:#6f7376;border-radius:1px;"></div>
<svg style="left:0;top:0" width="1400" height="900"><path d="M927.9,201.4H937.1L932.5,206.5Z" fill="#eef1f3"/></svg>
<div class="t" style="left:856px;top:192.725px;width:66px;height:23px;line-height:23px;font-size:14.5px;color:#49525b;text-align:left;font-weight:normal;transform-origin:left;transform:scaleX(0.93);">CH1</div>
<div class="t" style="left:808px;top:223.03px;width:120px;height:21.75px;line-height:21.75px;font-size:14.5px;color:#4b545d;text-align:left;font-weight:normal;">U3:</div>
<div style="left:848px;top:221.4px;width:97px;height:23px;background:#2a3138;border:1px solid #5f656b;border-radius:2px;"></div>
<div style="left:921px;top:222.9px;width:23px;height:20px;background:#6f7376;border-radius:1px;"></div>
<svg style="left:0;top:0" width="1400" height="900"><path d="M927.9,230.8H937.1L932.5,235.9Z" fill="#eef1f3"/></svg>
<div class="t" style="left:856px;top:222.125px;width:66px;height:23px;line-height:23px;font-size:14.5px;color:#49525b;text-align:left;font-weight:normal;transform-origin:left;transform:scaleX(0.93);">CH1</div>
<div style="left:926px;top:156.5px;width:210px;height:109px;background:#272d34;border:1px solid #4a535b;"></div>
<div style="left:927px;top:158px;width:208px;height:19.5px;background:#4088c4;"></div>
<div class="t" style="left:929px;top:156.4px;width:100px;height:22px;line-height:22px;font-size:15px;color:#f4f6f8;text-align:left;font-weight:normal;transform-origin:left;transform:scaleX(.9);">1P2W</div>
<div class="t" style="left:929px;top:178.25px;width:100px;height:22px;line-height:22px;font-size:15px;color:#c5cad0;text-align:left;font-weight:normal;transform-origin:left;transform:scaleX(.9);">1P3W</div>
<div class="t" style="left:929px;top:200.10000000000002px;width:100px;height:22px;line-height:22px;font-size:15px;color:#c5cad0;text-align:left;font-weight:normal;transform-origin:left;transform:scaleX(.9);">3P3W</div>
<div class="t" style="left:929px;top:221.95000000000002px;width:100px;height:22px;line-height:22px;font-size:15px;color:#c5cad0;text-align:left;font-weight:normal;transform-origin:left;transform:scaleX(.9);">3V3A</div>
<div class="t" style="left:929px;top:243.8px;width:100px;height:22px;line-height:22px;font-size:15px;color:#c5cad0;text-align:left;font-weight:normal;transform-origin:left;transform:scaleX(.9);">3P4W</div>
<div style="left:804px;top:269px;width:332px;height:207px;border:1px solid #454d55;"></div>
<div style="left:831.5px;top:267px;width:61px;height:5px;background:#2d343c;"></div>
<div class="t" style="left:833.5px;top:257.8px;width:57px;height:21.0px;line-height:21.0px;font-size:14px;color:#b9c0c6;text-align:left;font-weight:normal;">计算周期</div>
<div class="t" style="left:838px;top:280.65999999999997px;width:120px;height:21.0px;line-height:21.0px;font-size:14px;color:#c9ced3;text-align:left;font-weight:normal;">计算类型:</div>
<div class="t" style="left:838px;top:310.06px;width:120px;height:21.0px;line-height:21.0px;font-size:14px;color:#c9ced3;text-align:left;font-weight:normal;">边沿源:</div>
<div class="t" style="left:838px;top:339.46px;width:120px;height:21.0px;line-height:21.0px;font-size:14px;color:#c9ced3;text-align:left;font-weight:normal;">斜率:</div>
<div class="t" style="left:838px;top:368.86px;width:120px;height:21.0px;line-height:21.0px;font-size:14px;color:#c9ced3;text-align:left;font-weight:normal;">自定义迟滞:</div>
<div class="t" style="left:838px;top:398.26px;width:120px;height:21.0px;line-height:21.0px;font-size:14px;color:#c9ced3;text-align:left;font-weight:normal;">迟滞:</div>
<div class="t" style="left:838px;top:427.65999999999997px;width:120px;height:21.0px;line-height:21.0px;font-size:14px;color:#c9ced3;text-align:left;font-weight:normal;">电平:</div>
<div style="left:937.5px;top:277.4px;width:167px;height:24px;background:#39444d;border:1px solid #4d5862;"></div>
<div style="left:937.5px;top:277.4px;width:83.5px;height:24px;background:#4088c4;border:1px solid #5a9ad0;"></div>
<div class="t" style="left:937.5px;top:278.0px;width:83.5px;height:24px;line-height:24px;font-size:15px;color:#f4f6f8;text-align:center;font-weight:bold;transform:scaleX(.9);">Edge</div>
<div class="t" style="left:1021px;top:278.0px;width:83.5px;height:24px;line-height:24px;font-size:15px;color:#b9c0c6;text-align:center;font-weight:normal;transform:scaleX(.9);">AutoTime</div>
<div style="left:937.5px;top:307px;width:167px;height:23.5px;background:#2a3138;border:1px solid #666d74;border-radius:2px;"></div>
<div style="left:1083.5px;top:308.5px;width:20px;height:20.5px;background:#62727f;border-radius:1px;"></div>
<svg style="left:0;top:0" width="1400" height="900"><path d="M1089.5,316.9H1097.5L1093.5,321.4Z" fill="#eef1f3"/></svg>
<div class="t" style="left:960.5px;top:307.6px;width:124px;height:23.5px;line-height:23.5px;font-size:15px;color:#c3c9cf;text-align:left;font-weight:normal;transform-origin:left;transform:scaleX(0.93);">CH1</div>
<div style="left:937.5px;top:336px;width:167px;height:24px;background:#39444d;border:1px solid #4d5862;"></div>
<div style="left:937.5px;top:336px;width:56.10000000000002px;height:24px;background:#4088c4;border:1px solid #5a9ad0;"></div>
<div style="left:993.6px;top:336px;width:55.39999999999998px;height:24px;border-right:1px solid #4d5862;"></div>
<svg style="left:0;top:0" width="1400" height="900"><g fill="none" stroke="#d6e6f5" stroke-width="1.09"><path d="M953.7,355.9H958.8V340.3H972.3V355.9H977.4"/></g><circle cx="958.8" cy="349.0" r="1.78" fill="#fff"/></svg>
<svg style="left:0;top:0" width="1400" height="900"><g fill="none" stroke="#99a1a8" stroke-width="1.09"><path d="M1009.5,355.9H1014.5V340.3H1028.1V355.9H1033.1"/></g><circle cx="1028.1" cy="349.0" r="1.78" fill="#fff"/></svg>
<svg style="left:0;top:0" width="1400" height="900"><g fill="none" stroke="#99a1a8" stroke-width="1.09"><path d="M1064.7,355.9H1070.2V340.3H1073.9M1079.6,340.3H1083.3V355.9H1088.8"/></g><circle cx="1070.2" cy="349.0" r="1.78" fill="#fff"/><circle cx="1083.3" cy="349.0" r="1.78" fill="#fff"/></svg>
<div style="left:937.5px;top:365.5px;width:167px;height:24px;background:#39444d;border:1px solid #4d5862;"></div>
<div style="left:937.5px;top:365.5px;width:83.5px;height:24px;background:#4088c4;border:1px solid #5a9ad0;"></div>
<div class="t" style="left:937.5px;top:366.1px;width:83.5px;height:24px;line-height:24px;font-size:15px;color:#f4f6f8;text-align:center;font-weight:bold;transform:scaleX(.9);">OFF</div>
<div class="t" style="left:1021px;top:366.1px;width:83.5px;height:24px;line-height:24px;font-size:15px;color:#b9c0c6;text-align:center;font-weight:normal;transform:scaleX(.9);">ON</div>
<div style="left:937.5px;top:395px;width:167px;height:24px;background:#39444d;border:1px solid #4d5862;"></div>
<div style="left:937.5px;top:395px;width:56.10000000000002px;height:24px;background:#4088c4;border:1px solid #5a9ad0;"></div>
<div style="left:993.6px;top:395px;width:55.39999999999998px;height:24px;border-right:1px solid #4d5862;"></div>
<svg style="left:0;top:0" width="1400" height="900"><g fill="none" stroke="#e0ecf8" stroke-width="1.09"><path stroke-width="1.32" stroke-linejoin="round" d="M954.7,416.2L965.1,403.0L967.2,410.6L976.4,398.1"/><path stroke-dasharray="1.8 0.9" stroke-width="0.92" opacity=".85" d="M956.3,407.0H975.3"/></g></svg>
<svg style="left:0;top:0" width="1400" height="900"><g fill="none" stroke="#99a1a8" stroke-width="1.09"><path stroke-width="1.32" stroke-linejoin="round" d="M1010.5,416.2L1020.8,403.0L1022.9,410.6L1032.1,398.1"/><path stroke-dasharray="1.8 0.9" stroke-width="0.92" opacity=".85" d="M1012.1,404.8H1031.1M1012.1,409.2H1031.1"/></g></svg>
<svg style="left:0;top:0" width="1400" height="900"><g fill="none" stroke="#99a1a8" stroke-width="1.09"><path stroke-width="1.32" stroke-linejoin="round" d="M1065.9,416.2L1076.3,403.0L1078.4,410.6L1087.6,398.1"/><path stroke-dasharray="1.8 0.9" stroke-width="0.92" opacity=".85" d="M1067.5,402.1H1086.5"/><path stroke-width="0.92" opacity=".85" d="M1069.8,411.4H1086.5"/></g></svg>
<div style="left:937.5px;top:424.2px;width:167px;height:24px;background:#1c2024;border:1px solid #6a7177;border-radius:2px;"></div>
<div class="t" style="left:937.5px;top:424.8px;width:167px;height:24px;line-height:24px;font-size:15px;color:#e8eaec;text-align:center;font-weight:normal;transform:scaleX(.9);">0V</div>
<svg style="left:0;top:0" width="1400" height="900"><path d="M1143.3,368.8H1146.3V381.2H1143.3Z" fill="#2d343c"/><path d="M1145.3,368.3V369.8L1149.5,375L1145.3,380.2V381.7" fill="#2d343c" stroke="#12c4a6" stroke-width="1.5" stroke-linejoin="round"/></svg>
<div style="left:566px;top:140.2px;width:288px;height:45.4px;background:#0eb49f;border-radius:3px;"></div>
<div class="t" style="left:566px;top:142.3px;width:288px;height:45px;line-height:45px;font-size:24.5px;color:#fff;text-align:center;font-weight:bold;letter-spacing:0.75px;-webkit-text-stroke:0.35px #fff;">根据功率卡接法可分为</div>
<div style="left:570px;top:222px;width:279px;height:416.5px;background:#2d343c;border:1.5px solid #12c4a6;box-shadow:0 0 5px 1px rgba(18,196,166,.6), 0 0 10px 2px rgba(10,80,78,.5);"></div>
<div class="t" style="left:620px;top:238.28px;width:120px;height:18.0px;line-height:18.0px;font-size:12px;color:#b9c0c6;text-align:left;font-weight:normal;">运算类型:</div>
<div class="t" style="left:619px;top:266.08px;width:120px;height:18.0px;line-height:18.0px;font-size:12px;color:#b9c0c6;text-align:left;font-weight:normal;">数据源S1:</div>
<div class="t" style="left:619px;top:293.08px;width:120px;height:18.0px;line-height:18.0px;font-size:12px;color:#b9c0c6;text-align:left;font-weight:normal;">数据源S2:</div>
<div style="left:606px;top:361.3px;width:228px;height:101.5px;background:#1e2328;border:1px solid #3d454d;"></div>
<div style="left:613.5px;top:386.2px;width:120px;height:20.6px;background:#2f3740;border:1px solid #566069;border-radius:2px;"></div>
<div class="t" style="left:613.5px;top:386.2px;width:76px;height:20.6px;line-height:20.6px;font-size:15px;color:#eceef0;text-align:center;font-weight:normal;transform:scaleX(.92);">S1</div>
<svg style="left:0;top:0" width="1400" height="900"><g fill="none" stroke="#2d6fa8" stroke-width="1.3"><path d="M651.500,407V429H663"/><path d="M742.500,410V429H729"/></g><g stroke="#d0d4d8" stroke-width="1.2" fill="none"><path d="M668.500,429H677.500M673,424.500V433.500"/><path d="M683,429H691"/><path d="M699.500,425.200L707,432.800M707,425.200L699.500,432.800"/><path d="M716.500,429H725"/></g><circle cx="720.700" cy="425.600" r="0.900" fill="#d0d4d8"/><circle cx="720.700" cy="432.400" r="0.900" fill="#d0d4d8"/></svg>
<div style="left:683.5px;top:236.4px;width:137px;height:19px;background:#1c2024;border:1px solid #2d6396;border-radius:2px;"></div>
<div style="left:803.5px;top:237.9px;width:16px;height:16px;background:#62727f;border-radius:1px;"></div>
<svg style="left:0;top:0" width="1400" height="900"><path d="M808.3,244.5H814.7L811.5,248.0Z" fill="#eef1f3"/></svg>
<div class="t" style="left:689.5px;top:237.75px;width:115px;height:19px;line-height:19px;font-size:12px;color:#ffffff;text-align:left;font-weight:normal;transform-origin:left;transform:scaleX(0.95);">S1+S2</div>
<div style="left:683.5px;top:255.4px;width:137px;height:156.5px;background:#272d34;border:1px solid #4a535b;"></div>
<div style="left:684.5px;top:257px;width:135px;height:15px;background:#4088c4;"></div>
<div class="t" style="left:685.5px;top:255.39999999999998px;width:140px;height:18px;line-height:18px;font-size:11.5px;color:#f4f6f8;text-align:left;font-weight:normal;transform-origin:left;transform:scaleX(.9);">S1+S2</div>
<div class="t" style="left:685.5px;top:272.75px;width:140px;height:18px;line-height:18px;font-size:11.5px;color:#c0c6cc;text-align:left;font-weight:normal;transform-origin:left;transform:scaleX(.9);">S1-S2</div>
<div class="t" style="left:685.5px;top:290.09999999999997px;width:140px;height:18px;line-height:18px;font-size:11.5px;color:#c0c6cc;text-align:left;font-weight:normal;transform-origin:left;transform:scaleX(.9);">S1xS2</div>
<div class="t" style="left:685.5px;top:307.45px;width:140px;height:18px;line-height:18px;font-size:11.5px;color:#c0c6cc;text-align:left;font-weight:normal;transform-origin:left;transform:scaleX(.9);">S1/S2</div>
<div class="t" style="left:685.5px;top:324.79999999999995px;width:140px;height:18px;line-height:18px;font-size:11.5px;color:#c0c6cc;text-align:left;font-weight:normal;transform-origin:left;transform:scaleX(.9);">A(S1)+B(S2)+C</div>
<div class="t" style="left:685.5px;top:342.15px;width:140px;height:18px;line-height:18px;font-size:11.5px;color:#c0c6cc;text-align:left;font-weight:normal;transform-origin:left;transform:scaleX(.9);">A(S1)-B(S2)+C</div>
<div class="t" style="left:685.5px;top:359.5px;width:140px;height:18px;line-height:18px;font-size:11.5px;color:#c0c6cc;text-align:left;font-weight:normal;transform-origin:left;transform:scaleX(.9);">A(S1)*B(S2)+C</div>
<div class="t" style="left:685.5px;top:376.85px;width:140px;height:18px;line-height:18px;font-size:11.5px;color:#c0c6cc;text-align:left;font-weight:normal;transform-origin:left;transform:scaleX(.9);">A(S1)/B(S2)+C</div>
<div class="t" style="left:685.5px;top:394.2px;width:140px;height:18px;line-height:18px;font-size:11.5px;color:#c0c6cc;text-align:left;font-weight:normal;transform-origin:left;transform:scaleX(.9);">Power</div>
<div style="left:325px;top:275px;width:281px;height:522px;background:#2d343c;border:1.5px solid #12c4a6;box-shadow:0 0 5px 1px rgba(18,196,166,.6), 0 0 10px 2px rgba(10,80,78,.5);"></div>
<div class="t" style="left:335px;top:288.78px;width:120px;height:18.0px;line-height:18.0px;font-size:12px;color:#b9c0c6;text-align:left;font-weight:normal;">运算类型:</div>
<div class="t" style="left:335px;top:313.58px;width:120px;height:18.0px;line-height:18.0px;font-size:12px;color:#b9c0c6;text-align:left;font-weight:normal;">布线类型:</div>
<div style="left:428px;top:285.2px;width:170px;height:21.7px;background:linear-gradient(#3a4650,#36424c);border:1px solid #525d67;border-radius:2px;"></div>
<div style="left:579px;top:286.7px;width:18px;height:18.7px;background:#62727f;border-radius:1px;"></div>
<svg style="left:0;top:0" width="1400" height="900"><path d="M584.4,294.4H591.6L588.0,298.4Z" fill="#eef1f3"/></svg>
<div class="t" style="left:434px;top:286.55px;width:146px;height:21.7px;line-height:21.7px;font-size:12px;color:#bcc3c9;text-align:left;font-weight:normal;transform-origin:left;transform:scaleX(0.93);">Power</div>
<div style="left:428px;top:311px;width:170px;height:20.5px;background:linear-gradient(#3a4650,#36424c);border:1px solid #525d67;border-radius:2px;"></div>
<div style="left:579px;top:312.5px;width:18px;height:17.5px;background:#62727f;border-radius:1px;"></div>
<svg style="left:0;top:0" width="1400" height="900"><path d="M584.4,319.6H591.6L588.0,323.6Z" fill="#eef1f3"/></svg>
<div class="t" style="left:434px;top:312.35px;width:146px;height:20.5px;line-height:20.5px;font-size:12px;color:#bcc3c9;text-align:left;font-weight:normal;transform-origin:left;transform:scaleX(0.93);">1P2W</div>
<div class="t" style="left:335px;top:337.25px;width:120px;height:18.75px;line-height:18.75px;font-size:12.5px;color:#c9ced3;text-align:left;font-weight:normal;">U1:</div>
<div class="t" style="left:490.5px;top:337.25px;width:120px;height:18.75px;line-height:18.75px;font-size:12.5px;color:#c9ced3;text-align:left;font-weight:normal;">I1:</div>
<div style="left:366px;top:335.7px;width:76.5px;height:19.3px;background:#2a3138;border:1px solid #666d74;border-radius:2px;"></div>
<div style="left:424.5px;top:337.2px;width:17px;height:16.3px;background:#62727f;border-radius:1px;"></div>
<svg style="left:0;top:0" width="1400" height="900"><path d="M429.6,343.8H436.4L433.0,347.6Z" fill="#eef1f3"/></svg>
<div class="t" style="left:373px;top:337.05px;width:52.5px;height:19.3px;line-height:19.3px;font-size:12px;color:#c3c9cf;text-align:left;font-weight:normal;transform-origin:left;transform:scaleX(0.93);">CH1</div>
<div style="left:522px;top:335.7px;width:76px;height:19.3px;background:#2a3138;border:1px solid #666d74;border-radius:2px;"></div>
<div style="left:580px;top:337.2px;width:17px;height:16.3px;background:#62727f;border-radius:1px;"></div>
<svg style="left:0;top:0" width="1400" height="900"><path d="M585.1,343.8H591.9L588.5,347.6Z" fill="#eef1f3"/></svg>
<div class="t" style="left:529px;top:337.05px;width:52px;height:19.3px;line-height:19.3px;font-size:12px;color:#c3c9cf;text-align:left;font-weight:normal;transform-origin:left;transform:scaleX(0.93);">CH1</div>
<div class="t" style="left:335px;top:360.85px;width:120px;height:18.75px;line-height:18.75px;font-size:12.5px;color:#4b545d;text-align:left;font-weight:normal;">U2:</div>
<div class="t" style="left:490.5px;top:360.85px;width:120px;height:18.75px;line-height:18.75px;font-size:12.5px;color:#4b545d;text-align:left;font-weight:normal;">I2:</div>
<div style="left:366px;top:359.3px;width:76.5px;height:19.3px;background:#2a3138;border:1px solid #5f656b;border-radius:2px;"></div>
<div style="left:424.5px;top:360.8px;width:17px;height:16.3px;background:#6f7376;border-radius:1px;"></div>
<svg style="left:0;top:0" width="1400" height="900"><path d="M429.6,367.4H436.4L433.0,371.2Z" fill="#eef1f3"/></svg>
<div class="t" style="left:373px;top:360.65000000000003px;width:52.5px;height:19.3px;line-height:19.3px;font-size:12px;color:#49525b;text-align:left;font-weight:normal;transform-origin:left;transform:scaleX(0.93);">CH1</div>
<div style="left:522px;top:359.3px;width:76px;height:19.3px;background:#2a3138;border:1px solid #5f656b;border-radius:2px;"></div>
<div style="left:580px;top:360.8px;width:17px;height:16.3px;background:#6f7376;border-radius:1px;"></div>
<svg style="left:0;top:0" width="1400" height="900"><path d="M585.1,367.4H591.9L588.5,371.2Z" fill="#eef1f3"/></svg>
<div class="t" style="left:529px;top:360.65000000000003px;width:52px;height:19.3px;line-height:19.3px;font-size:12px;color:#49525b;text-align:left;font-weight:normal;transform-origin:left;transform:scaleX(0.93);">CH1</div>
<div class="t" style="left:335px;top:384.45px;width:120px;height:18.75px;line-height:18.75px;font-size:12.5px;color:#4b545d;text-align:left;font-weight:normal;">U3:</div>
<div class="t" style="left:490.5px;top:384.45px;width:120px;height:18.75px;line-height:18.75px;font-size:12.5px;color:#4b545d;text-align:left;font-weight:normal;">I3:</div>
<div style="left:366px;top:382.9px;width:76.5px;height:19.3px;background:#2a3138;border:1px solid #5f656b;border-radius:2px;"></div>
<div style="left:424.5px;top:384.4px;width:17px;height:16.3px;background:#6f7376;border-radius:1px;"></div>
<svg style="left:0;top:0" width="1400" height="900"><path d="M429.6,391.0H436.4L433.0,394.8Z" fill="#eef1f3"/></svg>
<div class="t" style="left:373px;top:384.25px;width:52.5px;height:19.3px;line-height:19.3px;font-size:12px;color:#49525b;text-align:left;font-weight:normal;transform-origin:left;transform:scaleX(0.93);">CH1</div>
<div style="left:522px;top:382.9px;width:76px;height:19.3px;background:#2a3138;border:1px solid #5f656b;border-radius:2px;"></div>
<div style="left:580px;top:384.4px;width:17px;height:16.3px;background:#6f7376;border-radius:1px;"></div>
<svg style="left:0;top:0" width="1400" height="900"><path d="M585.1,391.0H591.9L588.5,394.8Z" fill="#eef1f3"/></svg>
<div class="t" style="left:529px;top:384.25px;width:52px;height:19.3px;line-height:19.3px;font-size:12px;color:#49525b;text-align:left;font-weight:normal;transform-origin:left;transform:scaleX(0.93);">CH1</div>
<div style="left:334.5px;top:421px;width:263.5px;height:167px;border:1px solid #454d55;"></div>
<div style="left:352px;top:419px;width:50px;height:5px;background:#2d343c;"></div>
<div class="t" style="left:354px;top:411.8px;width:46px;height:17.25px;line-height:17.25px;font-size:11.5px;color:#aeb5bc;text-align:left;font-weight:normal;">计算周期</div>
<div class="t" style="left:359.5px;top:430.41px;width:120px;height:17.25px;line-height:17.25px;font-size:11.5px;color:#e3e6e9;text-align:left;font-weight:normal;">计算类型:</div>
<div class="t" style="left:359.5px;top:454.01px;width:120px;height:17.25px;line-height:17.25px;font-size:11.5px;color:#e3e6e9;text-align:left;font-weight:normal;">边沿源:</div>
<div class="t" style="left:359.5px;top:477.61px;width:120px;height:17.25px;line-height:17.25px;font-size:11.5px;color:#e3e6e9;text-align:left;font-weight:normal;">斜率:</div>
<div class="t" style="left:359.5px;top:501.21000000000004px;width:120px;height:17.25px;line-height:17.25px;font-size:11.5px;color:#e3e6e9;text-align:left;font-weight:normal;">自定义迟滞:</div>
<div class="t" style="left:359.5px;top:524.8100000000001px;width:120px;height:17.25px;line-height:17.25px;font-size:11.5px;color:#e3e6e9;text-align:left;font-weight:normal;">迟滞:</div>
<div class="t" style="left:359.5px;top:548.41px;width:120px;height:17.25px;line-height:17.25px;font-size:11.5px;color:#e3e6e9;text-align:left;font-weight:normal;">电平:</div>
<div style="left:438.3px;top:427.2px;width:134.5px;height:19.6px;background:#39444d;border:1px solid #4d5862;"></div>
<div style="left:438.3px;top:427.2px;width:67.39999999999998px;height:19.6px;background:#4088c4;border:1px solid #5a9ad0;"></div>
<div class="t" style="left:438.3px;top:428.55px;width:67.39999999999998px;height:19.6px;line-height:19.6px;font-size:12px;color:#f4f6f8;text-align:center;font-weight:bold;transform:scaleX(.9);">Edge</div>
<div class="t" style="left:505.7px;top:428.55px;width:67.09999999999997px;height:19.6px;line-height:19.6px;font-size:12px;color:#b9c0c6;text-align:center;font-weight:normal;transform:scaleX(.9);">AutoTime</div>
<div style="left:438.3px;top:451.2px;width:134.5px;height:19.4px;background:#2a3138;border:1px solid #666d74;border-radius:2px;"></div>
<div style="left:554.8px;top:452.7px;width:17px;height:16.4px;background:#62727f;border-radius:1px;"></div>
<svg style="left:0;top:0" width="1400" height="900"><path d="M559.9,459.4H566.7L563.3,463.1Z" fill="#eef1f3"/></svg>
<div class="t" style="left:457.3px;top:452.55px;width:98.5px;height:19.4px;line-height:19.4px;font-size:12px;color:#c3c9cf;text-align:left;font-weight:normal;transform-origin:left;transform:scaleX(0.93);">CH1</div>
<div style="left:438.3px;top:475px;width:134.5px;height:19.4px;background:#39444d;border:1px solid #4d5862;"></div>
<div style="left:438.3px;top:475px;width:45.599999999999966px;height:19.4px;background:#4088c4;border:1px solid #5a9ad0;"></div>
<div style="left:483.9px;top:475px;width:44.39999999999998px;height:19.4px;border-right:1px solid #4d5862;"></div>
<svg style="left:0;top:0" width="1400" height="900"><g fill="none" stroke="#d6e6f5" stroke-width="0.87"><path d="M451.6,491.0H455.7V478.5H466.5V491.0H470.6"/></g><circle cx="455.7" cy="485.5" r="1.43" fill="#fff"/></svg>
<svg style="left:0;top:0" width="1400" height="900"><g fill="none" stroke="#99a1a8" stroke-width="0.87"><path d="M496.6,491.0H500.7V478.5H511.5V491.0H515.6"/></g><circle cx="511.5" cy="485.5" r="1.43" fill="#fff"/></svg>
<svg style="left:0;top:0" width="1400" height="900"><g fill="none" stroke="#99a1a8" stroke-width="0.87"><path d="M540.9,491.0H545.3V478.5H548.2M552.8,478.5H555.8V491.0H560.2"/></g><circle cx="545.3" cy="485.5" r="1.43" fill="#fff"/><circle cx="555.8" cy="485.5" r="1.43" fill="#fff"/></svg>
<div style="left:438.3px;top:498.3px;width:134.5px;height:19.4px;background:#39444d;border:1px solid #4d5862;"></div>
<div style="left:438.3px;top:498.3px;width:67.39999999999998px;height:19.4px;background:#4088c4;border:1px solid #5a9ad0;"></div>
<div class="t" style="left:438.3px;top:499.65000000000003px;width:67.39999999999998px;height:19.4px;line-height:19.4px;font-size:12px;color:#f4f6f8;text-align:center;font-weight:bold;transform:scaleX(.9);">OFF</div>
<div class="t" style="left:505.7px;top:499.65000000000003px;width:67.09999999999997px;height:19.4px;line-height:19.4px;font-size:12px;color:#b9c0c6;text-align:center;font-weight:normal;transform:scaleX(.9);">ON</div>
<div style="left:438.3px;top:522px;width:134.5px;height:19.2px;background:#39444d;border:1px solid #4d5862;"></div>
<div style="left:438.3px;top:522px;width:45.599999999999966px;height:19.2px;background:#4088c4;border:1px solid #5a9ad0;"></div>
<div style="left:483.9px;top:522px;width:44.39999999999998px;height:19.2px;border-right:1px solid #4d5862;"></div>
<svg style="left:0;top:0" width="1400" height="900"><g fill="none" stroke="#e0ecf8" stroke-width="0.87"><path stroke-width="1.06" stroke-linejoin="round" d="M452.5,539.0L460.7,528.4L462.4,534.5L469.7,524.5"/><path stroke-dasharray="1.5 0.7" stroke-width="0.74" opacity=".85" d="M453.7,531.6H468.9"/></g></svg>
<svg style="left:0;top:0" width="1400" height="900"><g fill="none" stroke="#99a1a8" stroke-width="0.87"><path stroke-width="1.06" stroke-linejoin="round" d="M497.5,539.0L505.7,528.4L507.4,534.5L514.7,524.5"/><path stroke-dasharray="1.5 0.7" stroke-width="0.74" opacity=".85" d="M498.7,529.9H513.9M498.7,533.3H513.9"/></g></svg>
<svg style="left:0;top:0" width="1400" height="900"><g fill="none" stroke="#99a1a8" stroke-width="0.87"><path stroke-width="1.06" stroke-linejoin="round" d="M541.9,539.0L550.2,528.4L551.8,534.5L559.2,524.5"/><path stroke-dasharray="1.5 0.7" stroke-width="0.74" opacity=".85" d="M543.2,527.6H558.4"/><path stroke-width="0.74" opacity=".85" d="M545.0,535.1H558.4"/></g></svg>
<div style="left:438.3px;top:545.4px;width:134.5px;height:19.3px;background:#1c2024;border:1px solid #2d6396;border-radius:2px;"></div>
<div class="t" style="left:438.3px;top:546.75px;width:134.5px;height:19.3px;line-height:19.3px;font-size:12px;color:#e8eaec;text-align:center;font-weight:normal;transform:scaleX(.9);">0V</div>
<svg style="left:0;top:0" width="1400" height="900"><path d="M603.3,500.2H606.3V512.2H603.3Z" fill="#2d343c"/><path d="M605.3,499.7V501.2L608.9,506.2L605.3,511.2V512.7" fill="#2d343c" stroke="#12c4a6" stroke-width="1.5" stroke-linejoin="round"/></svg>
<div style="left:335px;top:600.8px;width:248.5px;height:192px;background:#1e2226;border:1px solid #4a525a;"></div>
<div class="t" style="left:377.5px;top:620px;width:50px;height:18px;line-height:18px;font-size:11.5px;color:#d4d8dc;text-align:left;font-weight:normal;transform-origin:left;transform:scaleX(.95);">Source</div>
<div class="t" style="left:517px;top:620px;width:30px;height:18px;line-height:18px;font-size:11.5px;color:#d4d8dc;text-align:left;font-weight:normal;transform-origin:left;transform:scaleX(.95);">Load</div>
<svg style="left:0;top:0" width="1400" height="900"><rect x="441.500" y="671.200" width="26.800" height="68" fill="#1e2226" stroke="#9a9fa4" stroke-width="1"/><g fill="none" stroke-width="2.6"><path d="M387,643.300H528.500" stroke="#f0e020"/><path d="M458.600,643.300V676" stroke="#e0d01c" stroke-width="1.600"/><g stroke="#1e9be0"><path d="M387,651H428.200V730.200H453"/><path d="M528.500,651H493"/><path d="M493.100,651V714.700H464"/><path d="M493,651H472.200V695H464" stroke-width="1.600"/></g></g><circle cx="493.100" cy="651" r="3" fill="#1e9be0"/><g fill="#1e2226" stroke-width="1.500"><circle cx="458.600" cy="680" r="5.200" stroke="#f0e020"/><circle cx="458.600" cy="695.400" r="5.200" stroke="#1e9be0"/><circle cx="458.600" cy="714.800" r="5.200" stroke="#1e9be0"/><circle cx="458.600" cy="729.900" r="5.200" stroke="#1e9be0"/></g><g fill="#fff"><circle cx="458.600" cy="680" r="3.400"/><circle cx="458.600" cy="695.400" r="3.400"/><circle cx="458.600" cy="714.800" r="3.400"/><circle cx="458.600" cy="729.900" r="3.400"/></g><g stroke="#1e2226" stroke-width="1.200"><path d="M456.300,680H460.900M458.600,677.700V682.300"/><path d="M456.300,695.400H460.900"/><path d="M456.300,714.800H460.900M458.600,712.500V717.100"/><path d="M456.300,729.900H460.900"/></g></svg>
<div class="t" style="left:444px;top:679px;width:10px;height:14px;line-height:14px;font-size:9.5px;color:#d4d8dc;text-align:left;font-weight:normal;">U</div>
<div class="t" style="left:445.5px;top:714px;width:10px;height:14px;line-height:14px;font-size:9.5px;color:#d4d8dc;text-align:left;font-weight:normal;">I</div>
<div class="t" style="left:404px;top:758px;width:100px;height:20px;line-height:20px;font-size:13px;color:#fff;text-align:center;font-weight:bold;transform:scaleX(.92);">1P2W</div>
</body></html>
